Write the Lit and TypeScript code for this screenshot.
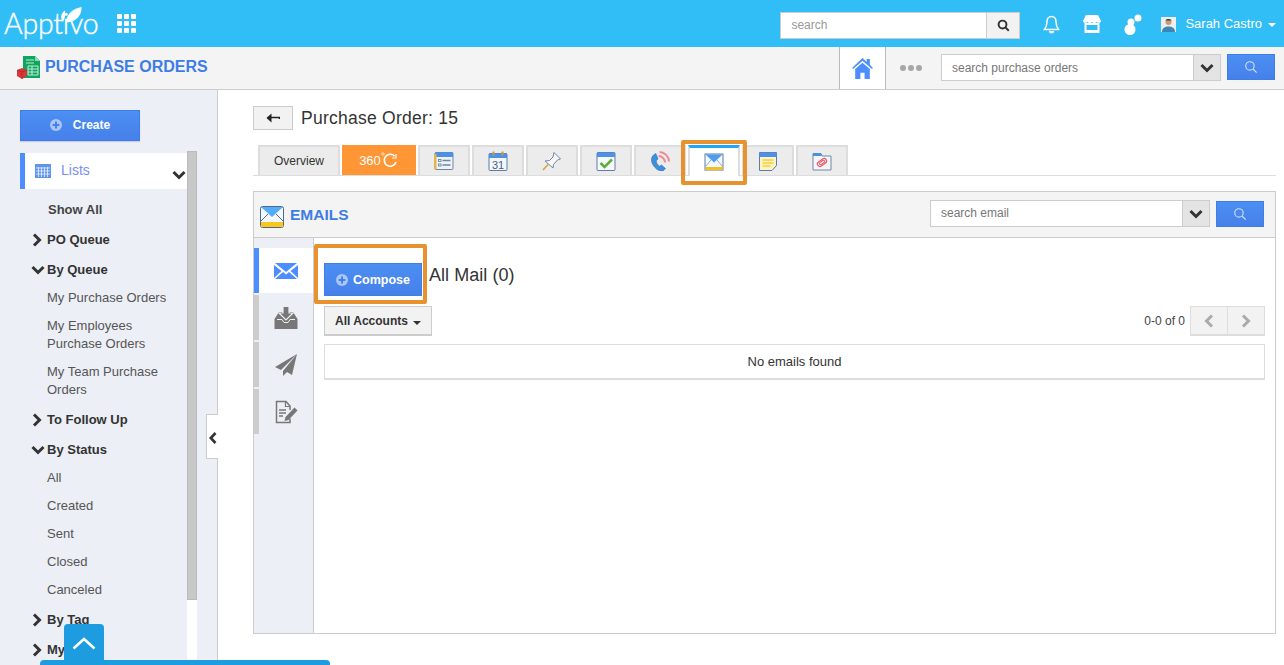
import { LitElement, html, css, svg } from "lit";
import { customElement } from "lit/decorators.js";

const chevDown = html`<svg width="14" height="10" viewBox="0 0 14 10"><path d="M1.500 2 7 7.500 12.500 2" fill="none" stroke="currentColor" stroke-width="3"/></svg>`;
const chevRight = html`<svg width="10" height="14" viewBox="0 0 10 14"><path d="M2 1.500 7.500 7 2 12.500" fill="none" stroke="currentColor" stroke-width="3"/></svg>`;
const glass = (c: string, w = 2, s = 16) => html`<svg width="${s}" height="${s}" viewBox="0 0 16 16"><circle cx="6.800" cy="6.800" r="4.800" fill="none" stroke="${c}" stroke-width="${w}"/><path d="M10.300 10.300 14.500 14.500" stroke="${c}" stroke-width="${w}"/></svg>`;
const plus = html`<svg width="12" height="12" viewBox="0 0 12 12"><circle cx="6" cy="6" r="6" fill="#a9c6f7"/><path d="M6 2.600v6.800M2.600 6h6.800" stroke="#4680ea" stroke-width="2"/></svg>`;

const tabIcons = [
  svg`<rect x="1" y="1.500" width="18" height="17" rx="1" fill="#eef3fa" stroke="#6e87a8"/><rect x="1" y="1.500" width="18" height="4.500" fill="#4c90e8"/><rect x="0.500" y="3" width="2" height="15.500" fill="#f0b429"/><path d="M8.500 9.500h8M8.500 14h8" stroke="#6e87a8" stroke-width="1.500"/><rect x="4.500" y="8.500" width="2.500" height="2" fill="none" stroke="#6e87a8" stroke-width=".9"/><rect x="4.500" y="13" width="2.500" height="2" fill="none" stroke="#6e87a8" stroke-width=".9"/>`,
  svg`<rect x="1" y="2.500" width="18" height="17" rx="1" fill="#f3f7fc" stroke="#5c7da6"/><rect x="1" y="2.500" width="18" height="4.500" fill="#4c90e8"/><path d="M5.500 0.500v4M14.500 0.500v4" stroke="#c89a3a" stroke-width="2"/><text x="10" y="17.500" font-size="11" text-anchor="middle" fill="#4a5f7c" font-family="Liberation Sans">31</text>`,
  svg`<path d="M12 1.500 18.500 8 15.500 9 11.500 13.500 11 17 3 10 7.500 9.500 11 6Z" fill="#f7f7f7" stroke="#6e87a8"/><path d="M6 13.500 1 19" stroke="#d8a53a" stroke-width="1.600"/>`,
  svg`<rect x="1" y="1.500" width="18" height="18" rx="1" fill="#f5f8fc" stroke="#5c7da6"/><rect x="1" y="1.500" width="18" height="4.500" fill="#4c90e8"/><path d="M4.500 12 8.500 16 16 8.500" fill="none" stroke="#5fae3c" stroke-width="2.500"/>`,
  svg`<path d="M3.500 4C0 7.500 1.500 12.500 4.500 16c2.500 3 6 4.500 8.500 4l2.500-2.500-4-3.500-2 1.200C7.500 14 6 11.500 6.300 9.500L8 8 5.800 2.500Z" fill="#3f8fdc" stroke="#2f6fb0" stroke-width=".6"/><path d="M8.500 5c3.500 0 6.500 3 6.500 6.500M9.500 1c5 0 9.500 4.500 9.500 9.500" fill="none" stroke="#f08a96" stroke-width="2"/>`,
  svg`<rect x="1" y="2" width="18" height="16" fill="#f4f8fd" stroke="#5c7da6"/><rect x="1.500" y="15" width="17" height="3" fill="#f4bf1d"/><path d="M1.500 2.500 10 10.500l8.500-8Z" fill="#4c9cf0"/><path d="M1.500 14.500 7 8M18.500 14.500 13 8" stroke="#7d94b2" stroke-width=".8"/>`,
  svg`<path d="M1.500 1.500h17v13l-4.500 5H1.500Z" fill="#fdf3c4" stroke="#5c7da6"/><rect x="1.500" y="1.500" width="17" height="4.500" fill="#4c90e8"/><path d="M4.500 9h11M4.500 12h11M4.500 15h8" stroke="#f8cf3c" stroke-width="1.500"/>`,
  svg`<path d="M1 2.500h8l1 2.500h9v14H1Z" fill="#f5f6f9" stroke="#6e87a8"/><path d="M1 2.500h8l1 2.500H1Z" fill="#4c90e8"/><rect x="5" y="9" width="10" height="5" rx="2.500" transform="rotate(-35 10 11.500)" fill="none" stroke="#ea5a68" stroke-width="1.200"/><rect x="7" y="10.300" width="6" height="2.400" rx="1.200" transform="rotate(-35 10 11.500)" fill="none" stroke="#ea5a68" stroke-width="1"/>`,
];

type NavItem = { t: string; k: "show" | "closed" | "open" | "item" };
const nav: NavItem[] = [
  { t: "Show All", k: "show" },
  { t: "PO Queue", k: "closed" },
  { t: "By Queue", k: "open" },
  { t: "My Purchase Orders", k: "item" },
  { t: "My Employees Purchase Orders", k: "item" },
  { t: "My Team Purchase Orders", k: "item" },
  { t: "To Follow Up", k: "closed" },
  { t: "By Status", k: "open" },
  { t: "All", k: "item" },
  { t: "Created", k: "item" },
  { t: "Sent", k: "item" },
  { t: "Closed", k: "item" },
  { t: "Canceled", k: "item" },
  { t: "By Tag", k: "closed" },
  { t: "My Tags", k: "closed" },
];

@customElement("app-root")
export class AppRoot extends LitElement {
  static styles = css`
    :host { display: block; width: 1284px; height: 665px; overflow: hidden; position: relative; background: #fff; font-family: "Liberation Sans", Arial, sans-serif; color: #333; }
    * { box-sizing: border-box; }
    svg { display: block; flex: none; }
    .top { height: 47px; background: #31bdf6; display: flex; align-items: center; color: #fff; }
    .logo { width: 98px; margin-left: 4px; position: relative; height: 47px; font-family: "Lato", sans-serif; font-weight: 300; font-size: 28.500px; line-height: 45px; letter-spacing: -0.2px; padding-top: 1px; white-space: nowrap; -webkit-text-stroke: 0.4px #fff; }
    .sprout { position: absolute; left: 56px; top: 7px; }
    .apps { margin-left: 15px; display: grid; grid-template-columns: repeat(3, 5px); gap: 2px; margin-bottom: 1px; }
    .apps i { width: 5px; height: 5px; background: #fff; border-radius: 1px; display: block; }
    .spacer { flex: 1; }
    .topsearch { width: 240px; height: 27px; display: flex; border: 1px solid #ccc; background: #fff; margin-top: 3px; }
    .topsearch span { flex: 1; font-size: 12px; line-height: 25px; padding-left: 10px; color: #999; }
    .topsearch b { width: 33px; background: #f2f2f2; border-left: 1px solid #ccc; display: flex; align-items: center; justify-content: center; }
    .topicons { display: flex; align-items: center; margin-left: 23px; gap: 23px; margin-top: 1px; }
    .user { display: flex; align-items: center; margin-left: 19px; margin-right: 8px; font-size: 13px; gap: 9px; margin-top: 1px; }
    .user span { margin-top: -2px; }
    .caret { width: 0; height: 0; border: 4px solid transparent; border-top-color: #fff; border-bottom: 0; margin-left: -3px; margin-top: 1px; }
    .sub { height: 43px; background: #f4f4f4; border-bottom: 1px solid #ccc; display: flex; align-items: stretch; }
    .brand { display: flex; align-items: center; padding-left: 17px; gap: 4px; color: #3e7de6; font-weight: 700; font-size: 16px; flex: 1; padding-bottom: 2px; }
    .home { width: 47px; border-left: 1px solid #bbb; border-right: 1px solid #bbb; display: flex; align-items: center; justify-content: center; background: #fff; }
    .dots { width: 55px; display: flex; align-items: center; justify-content: center; gap: 2px; padding-right: 5px; }
    .dots i { width: 6px; height: 6px; background: #a6a6a6; border-radius: 50%; display: block; }
    .combo { display: flex; border: 1px solid #ccc; background: #fff; height: 27px; }
    .combo span { flex: 1; font-size: 12px; line-height: 26px; padding-left: 10px; color: #777; }
    .combo b { width: 27px; background: #e4e4e4; border-left: 1px solid #ccc; display: flex; align-items: center; justify-content: center; color: #333; }
    .sub .combo { width: 280px; margin-top: 7px; }
    .bluebtn { width: 48px; height: 26px; background: linear-gradient(#4c8ff2, #4680ea); border: 1px solid #3f7ee8; display: flex; align-items: center; justify-content: center; }
    .sub .bluebtn { margin: 7px 9px 0 6px; }
    .body { display: flex; height: 575px; }
    .side { width: 218px; background: #eceff5; border-right: 1px solid #ccc; padding: 20px 0 0 20px; flex: none; overflow: hidden; }
    .create { width: 120px; height: 31px; background: linear-gradient(#4c8ff2, #4680ea); border: 1px solid #3f7ee8; color: #fff; font-size: 12px; font-weight: 700; display: flex; align-items: center; justify-content: center; gap: 11px; box-shadow: 0 1px 1px #ccd; padding-bottom: 2px; }
    .sidewrap { display: flex; margin-top: 10px; }
    .navcol { width: 167px; padding-top: 2px; }
    .lists { height: 36px; background: #fff; border-left: 5px solid #4c8dff; display: flex; align-items: center; color: #7b8ff0; font-size: 14px; position: relative; }
    .lists .cal { margin-left: 10px; margin-right: 10px; }
    .lists .lbl { margin-top: -3px; }
    .lists .cv { position: absolute; right: 1px; top: 17px; color: #333; }
    .scroll { width: 10px; height: 520px; background: #fff; }
    .thumb { height: 449px; background: #c8c8c8; border: 1px solid #bbb; width: 10px; }
    .navitems { padding-top: 5px; }
    .row { position: relative; line-height: 18px; margin: 0; color: #333; }
    .row.closed, .row.open, .row.show { font-weight: 700; font-size: 13px; padding: 7px 0 5px 27px; }
    .row.show { padding-left: 28px; color: #444; }
    .row.item { padding: 5px 10px 5px 27px; color: #555; font-size: 13px; }
    .row .ic { position: absolute; left: 12px; top: 9px; color: #333; }
    .row.open .ic { left: 11px; top: 11px; }
    .collapse { position: absolute; left: 206px; top: 414px; width: 12px; height: 45px; background: #fff; border: 1px solid #ccc; border-right: 0; display: flex; align-items: center; justify-content: center; color: #333; padding-top: 2px; }
    .main { flex: 1; padding: 16px 8px 0 35px; min-width: 0; position: relative; }
    .titlerow { display: flex; align-items: center; gap: 8px; height: 24px; }
    .back { width: 40px; height: 24px; background: #f2f2f2; border: 1px solid #ccc; display: flex; align-items: center; justify-content: center; }
    .title { font-size: 17.500px; color: #333; letter-spacing: 0.25px; }
    .tabs { display: flex; gap: 2px; height: 31px; margin-top: 15px; padding-left: 5px; border-bottom: 1px solid #ddd; }
    .tab { width: 52px; height: 30px; background: #ececec; border: 2px solid #ddd; border-bottom: 0; display: flex; align-items: center; justify-content: center; }
    .tab.ov { width: 82px; font-size: 12px; color: #333; }
    .tab.o360 { width: 74px; background: #ff9635; border: 0; color: #fff; font-size: 13px; gap: 0; }
    .tab.active { background: #fff; border-top: 3px solid #1ea7f2; border-left-color: #ddd; height: 31px; margin-bottom: -1px; }
    .panel { margin-top: 15px; height: 443px; border: 1px solid #ccc; display: flex; flex-direction: column; }
    .phead { height: 46px; background: #f4f4f4; border-bottom: 1px solid #ccc; display: flex; align-items: center; padding: 0 11px 2px 6px; }
    .phead .env { margin-top: 7px; }
    .phead .name { flex: 1; color: #3e7de6; font-weight: 700; font-size: 15.500px; padding-left: 6px; margin-top: 3px; }
    .phead .combo { width: 280px; }
    .phead .combo span { line-height: 25px; }
    .phead .bluebtn { margin-left: 6px; }
    .pbody { flex: 1; display: flex; min-height: 0; }
    .rail { width: 60px; background: #eceff5; border-right: 1px solid #ccc; padding-top: 10px; display: flex; flex-direction: column; gap: 2px; flex: none; }
    .rail div { height: 45px; border-left: 5px solid #ccc; display: flex; align-items: center; justify-content: center; }
    .rail div.on { background: #fff; border-left-color: #4c8dff; }
    .content { flex: 1; padding: 25px 10px 0 10px; min-width: 0; }
    .cmprow { display: flex; align-items: center; gap: 7px; height: 33px; }
    .compose { width: 98px; height: 33px; background: linear-gradient(#4c8ff2, #4680ea); border: 1px solid #3f7ee8; color: #fff; font-size: 12.500px; font-weight: 700; display: flex; align-items: center; justify-content: center; gap: 5px; }
    .cmprow .h { font-size: 18px; color: #333; margin-bottom: 8px; letter-spacing: 0.05px; }
    .toolrow { display: flex; align-items: center; justify-content: space-between; margin-top: 10px; height: 30px; }
    .acct { width: 108px; height: 30px; background: #f2f2f2; border: 1px solid #ccc; border-bottom-width: 2px; font-size: 12px; font-weight: 700; color: #333; display: flex; align-items: center; justify-content: center; gap: 5px; }
    .acct i { width: 0; height: 0; border: 4px solid transparent; border-top-color: #333; border-bottom: 0; margin-top: 4px; }
    .pg { display: flex; align-items: center; font-size: 12px; color: #444; gap: 5px; }
    .pgbtns { display: flex; border: 1px solid #ddd; border-bottom-width: 2px; background: #f2f2f2; height: 30px; color: #aaa; }
    .pgbtns b { width: 37px; display: flex; align-items: center; justify-content: center; }
    .pgbtns b:first-child { width: 36px; }
    .pgbtns b + b { border-left: 1px solid #ddd; }
    .empty { margin-top: 8px; height: 36px; border: 1px solid #ddd; border-bottom-width: 2px; text-align: center; font-size: 13px; line-height: 33px; color: #333; }
    .mark { position: absolute; border: 4px solid #e8922f; border-radius: 2px; pointer-events: none; }
    .m1 { left: 681px; top: 140px; width: 66px; height: 45px; }
    .m2 { left: 314px; top: 244px; width: 113px; height: 60px; }
    .upwrap { position: absolute; left: 40px; bottom: 0; width: 290px; height: 41px; display: flex; flex-direction: column; }
    .up { width: 40px; height: 36px; margin-left: 24px; background: #1d9ce0; border-radius: 4px 4px 0 0; display: flex; justify-content: center; padding-top: 13px; }
    .upbar { height: 5px; background: #1d9ce0; border-radius: 4px 4px 0 0; }
  `;

  render() {
    return html`
      <div class="top">
        <div class="logo">Apptivo
          <svg class="sprout" width="22" height="16" viewBox="0 0 22 16"><path d="M3 15C0 11 1 6 5 3.500 5.500 8 5 12 3 15ZM6.500 15.500C6 9 11 2 21.500 0c.5 8-5 15-15 15.500Z" fill="#fff"/></svg>
        </div>
        <div class="apps">${Array.from({ length: 9 }, () => html`<i></i>`)}</div>
        <div class="spacer"></div>
        <div class="topsearch"><span>search</span><b>${glass("#333", 2.4, 13)}</b></div>
        <div class="topicons">
          <svg width="17" height="19" viewBox="0 0 17 19"><path d="M8.500 1.500c-3 0-4.500 2.500-4.500 5 0 4-1 6-2.500 8h14c-1.500-2-2.500-4-2.500-8 0-2.500-1.500-5-4.500-5Z" fill="none" stroke="#fff" stroke-width="1.500"/><path d="M6 16a2.500 2.500 0 0 0 5 0Z" fill="#fff"/></svg>
          <svg width="18" height="20" viewBox="0 0 18 20"><path d="M3 1h12l3 6c0 2-3 2.500-4.500 1-1 1.500-3.500 1.500-4.500 0-1 1.500-3.500 1.500-4.500 0C3 9.500 0 9 0 7Z" fill="#fff"/><path d="M1.500 9h15v10h-15Zm2 2v5h11v-5Z" fill="#fff" fill-rule="evenodd"/></svg>
          <svg width="18" height="21" viewBox="0 0 18 21"><circle cx="14" cy="4" r="3.500" fill="#fff"/><circle cx="7" cy="8" r="3.500" fill="#fff"/><circle cx="6" cy="15.500" r="5.500" fill="#fff"/></svg>
        </div>
        <div class="user">
          <svg width="15" height="15" viewBox="0 0 15 15"><rect width="15" height="15" fill="#eee"/><circle cx="7.500" cy="5" r="3" fill="#c99a78"/><path d="M4.500 3.500C5 1.500 10 1.500 10.500 3.500Z" fill="#4a3a2c"/><path d="M1 15c0-4 3-5.500 6.500-5.500S14 11 14 15Z" fill="#3f86b8"/></svg>
          <span>Sarah Castro</span><i class="caret"></i>
        </div>
      </div>
      <div class="sub">
        <div class="brand">
          <svg width="24" height="24" viewBox="0 0 24 24"><path d="M6 1h12l5 5v17H6Z" fill="#0da55f"/><path d="M18 1l5 5h-5Z" fill="#8fd9b4"/><path d="M9 5h8M9 8h8" stroke="#bfeccf"/><path d="M11 11h10v9H11Zm0 3h10M11 17h10M15 11v9" fill="none" stroke="#d6f3e2" stroke-width=".9"/><path d="M0 15l5-2 5 2v6l-5 3-5-3Z" fill="#d8383a"/><path d="M0 15l5 2 5-2M5 17v7" fill="none" stroke="#a92528" stroke-width=".7"/></svg>
          <span>PURCHASE ORDERS</span>
        </div>
        <div class="home"><svg width="23" height="22" viewBox="0 0 22 21"><path d="M11 1 1 10.500l1 1L11 3.500l9 8 1-1-3-3V2h-3v2.800Z" fill="#4c8dff"/><path d="M4 11.500 11 5.500l7 6V21h-5v-6H9v6H4Z" fill="#4c8dff"/></svg></div>
        <div class="dots"><i></i><i></i><i></i></div>
        <div class="combo"><span>search purchase orders</span><b>${chevDown}</b></div>
        <div class="bluebtn">${glass("#cfe0fb", 1.3, 14)}</div>
      </div>
      <div class="body">
        <div class="side">
          <div class="create">${plus}<span>Create</span></div>
          <div class="sidewrap">
            <div class="navcol">
              <div class="lists">
                <svg class="cal" width="16" height="14" viewBox="0 0 16 14"><rect width="16" height="14" fill="#5c95ea"/><path d="M1 4h14M1 7h14M1 10h14M3.500 3v10M6.500 3v10M9.500 3v10M12.500 3v10" stroke="#dce8fb" stroke-width=".9"/></svg>
                <span class="lbl">Lists</span>
                <span class="cv">${chevDown}</span>
              </div>
              <div class="navitems">
                ${nav.map((n) => html`<div class="row ${n.k}">
                  ${n.k === "closed" ? html`<span class="ic">${chevRight}</span>` : n.k === "open" ? html`<span class="ic">${chevDown}</span>` : ""}
                  ${n.t}
                </div>`)}
              </div>
            </div>
            <div class="scroll"><div class="thumb"></div></div>
          </div>
        </div>
        <div class="main">
          <div class="titlerow">
            <div class="back"><svg width="14" height="10" viewBox="0 0 14 10"><path d="M1.500 4.500H13.500v1.500" fill="none" stroke="#222" stroke-width="1.600"/><path d="M5.500 0.500 0.500 5l5 4.500Z" fill="#222"/></svg></div>
            <div class="title">Purchase Order: 15</div>
          </div>
          <div class="tabs">
            <div class="tab ov">Overview</div>
            <div class="tab o360"><span>360</span><svg width="18" height="18" viewBox="0 0 18 18"><circle cx="2" cy="3" r="1.200" fill="none" stroke="#fff" stroke-width=".7"/><path d="M15 11a6 6 0 1 1-1.500-6" fill="none" stroke="#fff" stroke-width="1.600"/><path d="M15 3v4h-4" fill="none" stroke="#fff" stroke-width="1.200"/></svg></div>
            ${tabIcons.map((ic, i) => html`<div class="tab ${i === 5 ? "active" : ""}"><svg width="20" height="20" viewBox="0 0 20 20">${ic}</svg></div>`)}
          </div>
          <div class="panel">
            <div class="phead">
              <svg class="env" width="24" height="22" viewBox="0 0 24 22"><rect x=".5" y=".5" width="23" height="21" rx="2" fill="#f4f8fd" stroke="#4c6a8f"/><rect x="1" y="16" width="22" height="5" fill="#f9c81e"/><path d="M1 1h22L12 11Z" fill="#55adf8"/><path d="M1 15 8 8M23 15l-7-7" stroke="#4c6a8f"/></svg>
              <div class="name">EMAILS</div>
              <div class="combo"><span>search email</span><b>${chevDown}</b></div>
              <div class="bluebtn">${glass("#cfe0fb", 1.3, 14)}</div>
            </div>
            <div class="pbody">
              <div class="rail">
                <div class="on"><svg width="24" height="16" viewBox="0 0 24 16"><path d="M1 0h22L12 9Z" fill="#4c8dff"/><path d="M0 2v13l7.500-7ZM24 2v13l-7.500-7ZM1 16h22l-8-7-3 2.500L9 9Z" fill="#4c8dff"/></svg></div>
                <div><svg width="24" height="24" viewBox="0 0 24 24"><path d="M5 6 0.500 13v10h23V13L19 6Z" fill="#777"/><path d="M3 13.500h5l2 3h4l2-3h5" fill="none" stroke="#eceff5" stroke-width="1"/><path d="M9 .5h6v6.500h4l-7 7-7-7h4Z" fill="#777" stroke="#eceff5" stroke-width="1.200"/></svg></div>
                <div><svg width="22" height="22" viewBox="0 0 22 22"><path d="M22 0 0 13l6 3ZM22 0 8 17v5l4-4 5 3Z" fill="#777"/></svg></div>
                <div><svg width="23" height="24" viewBox="0 0 23 24"><path d="M15 10V6l-4-4.500H1.500v21H15v-4" fill="none" stroke="#777" stroke-width="1.500"/><path d="M10.500 1.500V6.500H15" fill="none" stroke="#777" stroke-width="1.200"/><path d="M4 10h7M4 13h7M4 16h4" stroke="#777" stroke-width="1.500"/><path d="M19.500 7.500l3 3-9 9.500-4 1 1-4Z" fill="#777"/></svg></div>
              </div>
              <div class="content">
                <div class="cmprow">
                  <div class="compose">${plus}<span>Compose</span></div>
                  <div class="h">All Mail (0)</div>
                </div>
                <div class="toolrow">
                  <div class="acct"><span>All Accounts</span><i></i></div>
                  <div class="pg"><span>0-0 of 0</span>
                    <div class="pgbtns"><b><svg width="10" height="14" viewBox="0 0 10 14"><path d="M8 1.500 2.500 7 8 12.500" fill="none" stroke="currentColor" stroke-width="3"/></svg></b><b>${chevRight}</b></div>
                  </div>
                </div>
                <div class="empty">No emails found</div>
              </div>
            </div>
          </div>
        </div>
      </div>
      <div class="collapse"><svg width="8" height="12" viewBox="0 0 8 12"><path d="M6.500 1 1.800 6l4.700 5" fill="none" stroke="#333" stroke-width="2.600"/></svg></div>
      <div class="mark m1"></div>
      <div class="mark m2"></div>
      <div class="upwrap">
        <div class="up"><svg width="24" height="13" viewBox="0 0 24 13"><path d="M1.500 11.500 12 2l10.500 9.500" fill="none" stroke="#fff" stroke-width="2.500"/></svg></div>
        <div class="upbar"></div>
      </div>
    `;
  }
}
